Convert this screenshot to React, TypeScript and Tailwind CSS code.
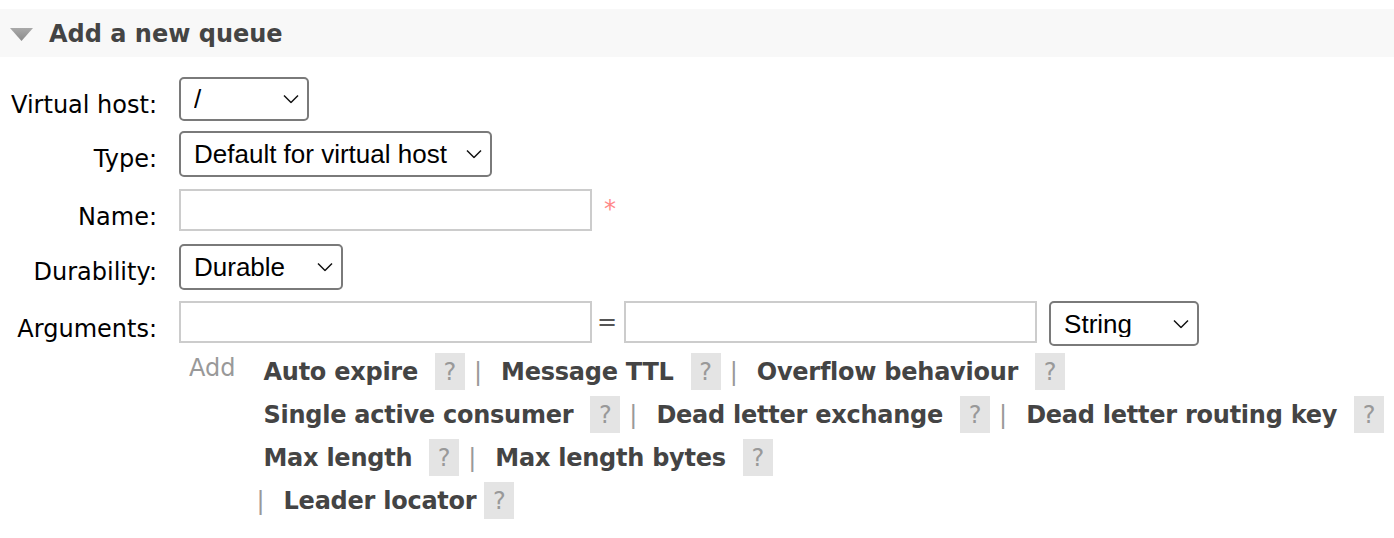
import React from "react";

function Chevron() {
  return (
    <svg
      width="16"
      height="9"
      viewBox="0 0 16 9"
      className="pointer-events-none absolute right-[10px] top-1/2 -translate-y-1/2"
    >
      <polyline points="1,1 8,8 15,1" fill="none" stroke="#111" strokeWidth="1.5" />
    </svg>
  );
}

function Select({ value, className }: { value: string; className: string }) {
  return (
    <div className={`relative shrink-0 ${className}`}>
      <select
        defaultValue={value}
        className="h-full w-full appearance-none rounded-[5px] border-2 border-[#7a7a7a] bg-white pl-[13px] font-['Liberation_Sans',Arial,sans-serif] text-[26px] leading-none text-black outline-none"
      >
        <option value={value}>{value}</option>
      </select>
      <Chevron />
    </div>
  );
}

function Row({
  label,
  className,
  children,
}: {
  label: string;
  className: string;
  children: React.ReactNode;
}) {
  return (
    <div className={`flex items-start ${className}`}>
      <div className="w-[157px] shrink-0 whitespace-nowrap pt-[14px] text-right text-[24px] leading-[28px] text-black">
        {label}
      </div>
      <div className="ml-[22px] flex items-start">{children}</div>
    </div>
  );
}

function Help({ gap }: { gap: string }) {
  return (
    <span
      className={`${gap} flex h-[37px] w-[30px] shrink-0 items-center justify-center bg-[#e4e4e4] text-[24px] font-normal text-[#999]`}
    >
      ?
    </span>
  );
}

function Pipe({ first }: { first?: boolean }) {
  return (
    <span
      className={`${first ? "" : "ml-[9px]"} mr-[19px] shrink-0 text-[24px] font-normal text-[#999]`}
    >
      |
    </span>
  );
}

function Arg({ label, gap = "ml-[17px]" }: { label: string; gap?: string }) {
  return (
    <span className="flex shrink-0 items-center whitespace-nowrap">
      <span className="text-[24px] font-bold tracking-[-0.25px] text-[#444]">{label}</span>
      <Help gap={gap} />
    </span>
  );
}

export default function App() {
  return (
    <div className="min-h-screen bg-white pt-[9px] font-['DejaVu_Sans',Verdana,sans-serif]">
      <div className="flex h-[48px] items-center bg-[#f8f8f8]">
        <svg width="23" height="13" viewBox="0 0 23 13" className="ml-[10px] mt-[3px]">
          <defs>
            <linearGradient id="tri" x1="0" y1="0" x2="0" y2="1">
              <stop offset="0" stopColor="#aaaaaa" />
              <stop offset="1" stopColor="#8a8a8a" />
            </linearGradient>
          </defs>
          <polygon points="0,0 23,0 11.5,13" fill="url(#tri)" />
        </svg>
        <span className="ml-[16px] mt-[2px] text-[24px] font-bold text-[#444]">Add a new queue</span>
      </div>

      <div className="mt-[20px]">
        <Row label="Virtual host:" className="">
          <Select value="/" className="h-[44px] w-[130px]" />
        </Row>
        <Row label="Type:" className="mt-[10px]">
          <Select value="Default for virtual host" className="h-[46px] w-[313px]" />
        </Row>
        <Row label="Name:" className="mt-[12px]">
          <div className="flex items-center">
            <input className="h-[42px] w-[413px] border-2 border-[#cccccc] bg-white outline-none" />
            <span className="ml-[12px] mt-[-2px] text-[24px] text-[#f88]">*</span>
          </div>
        </Row>
        <Row label="Durability:" className="mt-[13px]">
          <Select value="Durable" className="h-[46px] w-[164px]" />
        </Row>
        <Row label="Arguments:" className="mt-[11px]">
          <input className="h-[42px] w-[413px] border-2 border-[#cccccc] bg-white outline-none" />
          <span className="ml-[5px] mr-[7px] h-[42px] text-[24px] leading-[42px] text-[#555]">=</span>
          <input className="h-[42px] w-[413px] border-2 border-[#cccccc] bg-white outline-none" />
          <Select value="String" className="ml-[12px] h-[45px] w-[150px]" />
        </Row>

        <div className="mt-[4px] flex">
          <div className="w-[179px] shrink-0" />
          <div className="ml-[10px] flex h-[36px] items-center text-[24px] text-[#999]">Add</div>
          <div className="ml-[21px] flex flex-col">
            <div className="flex h-[43px] items-center pl-[7px]">
              <Arg label="Auto expire" />
              <Pipe />
              <Arg label="Message TTL" />
              <Pipe />
              <Arg label="Overflow behaviour" />
            </div>
            <div className="flex h-[43px] items-center pl-[7px]">
              <Arg label="Single active consumer" />
              <Pipe />
              <Arg label="Dead letter exchange" />
              <Pipe />
              <Arg label="Dead letter routing key" />
            </div>
            <div className="flex h-[43px] items-center pl-[7px]">
              <Arg label="Max length" />
              <Pipe />
              <Arg label="Max length bytes" />
            </div>
            <div className="flex h-[43px] items-center">
              <Pipe first />
              <Arg label="Leader locator" gap="ml-[8px]" />
            </div>
          </div>
        </div>
      </div>
    </div>
  );
}
